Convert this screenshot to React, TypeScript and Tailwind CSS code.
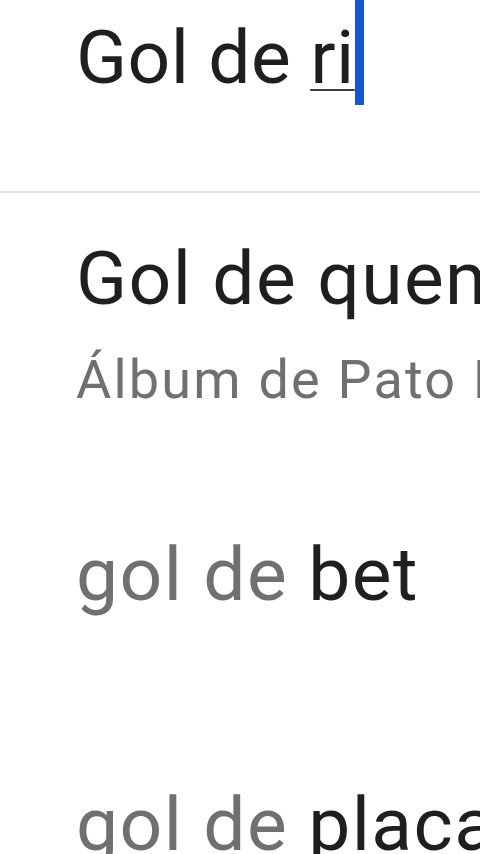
type SuggestionProps = {
  prefix: string;
  rest: string;
  subtitle?: string;
  plain?: boolean;
};

const Suggestion = ({ prefix, rest, subtitle, plain = false }: SuggestionProps) => {
  return (
    <div className="flex h-[250px] flex-col justify-center pl-[76px]">
      <div className="h-[75px] text-[75px] leading-[75px] tracking-[1.4px]">
        {plain ? (
          <span className="text-[#1f1f1f]">
            {prefix}
            {rest}
          </span>
        ) : (
          <>
            <span className="text-[#707070]">{prefix}</span>
            <span className="text-[#1f1f1f]">{rest}</span>
          </>
        )}
      </div>
      {subtitle && (
        <div className="mt-[37px] h-[54px] text-[54px] leading-[54px] tracking-[2.2px] text-[#707070]">
          {subtitle}
        </div>
      )}
    </div>
  );
};

export default function App() {
  return (
    <div
      className="h-[854px] w-[480px] overflow-hidden whitespace-nowrap bg-white"
      style={{ fontFamily: "Roboto, 'Noto Sans', sans-serif" }}
    >
      <div className="flex h-[191px] items-start pl-[76px]">
        <div className="mt-[20px] h-[75px] text-[75px] leading-[75px] tracking-[0.4px] text-[#1f1f1f]">
          Gol de{" "}
          <span className="underline decoration-[#3c3c3c] decoration-2 underline-offset-[6px]">
            ri
          </span>
        </div>
        <div className="h-[105px] w-[9px] bg-[#1257d6]" />
      </div>
      <div className="h-[2px] w-full bg-[#e3e3e3]" />
      <div className="flex flex-col pt-[6px]">
        <Suggestion prefix="" rest="Gol de quem?" subtitle="Álbum de Pato Fu" plain />
        <Suggestion prefix="gol de " rest="bet" />
        <Suggestion prefix="gol de " rest="placa" />
      </div>
    </div>
  );
}
